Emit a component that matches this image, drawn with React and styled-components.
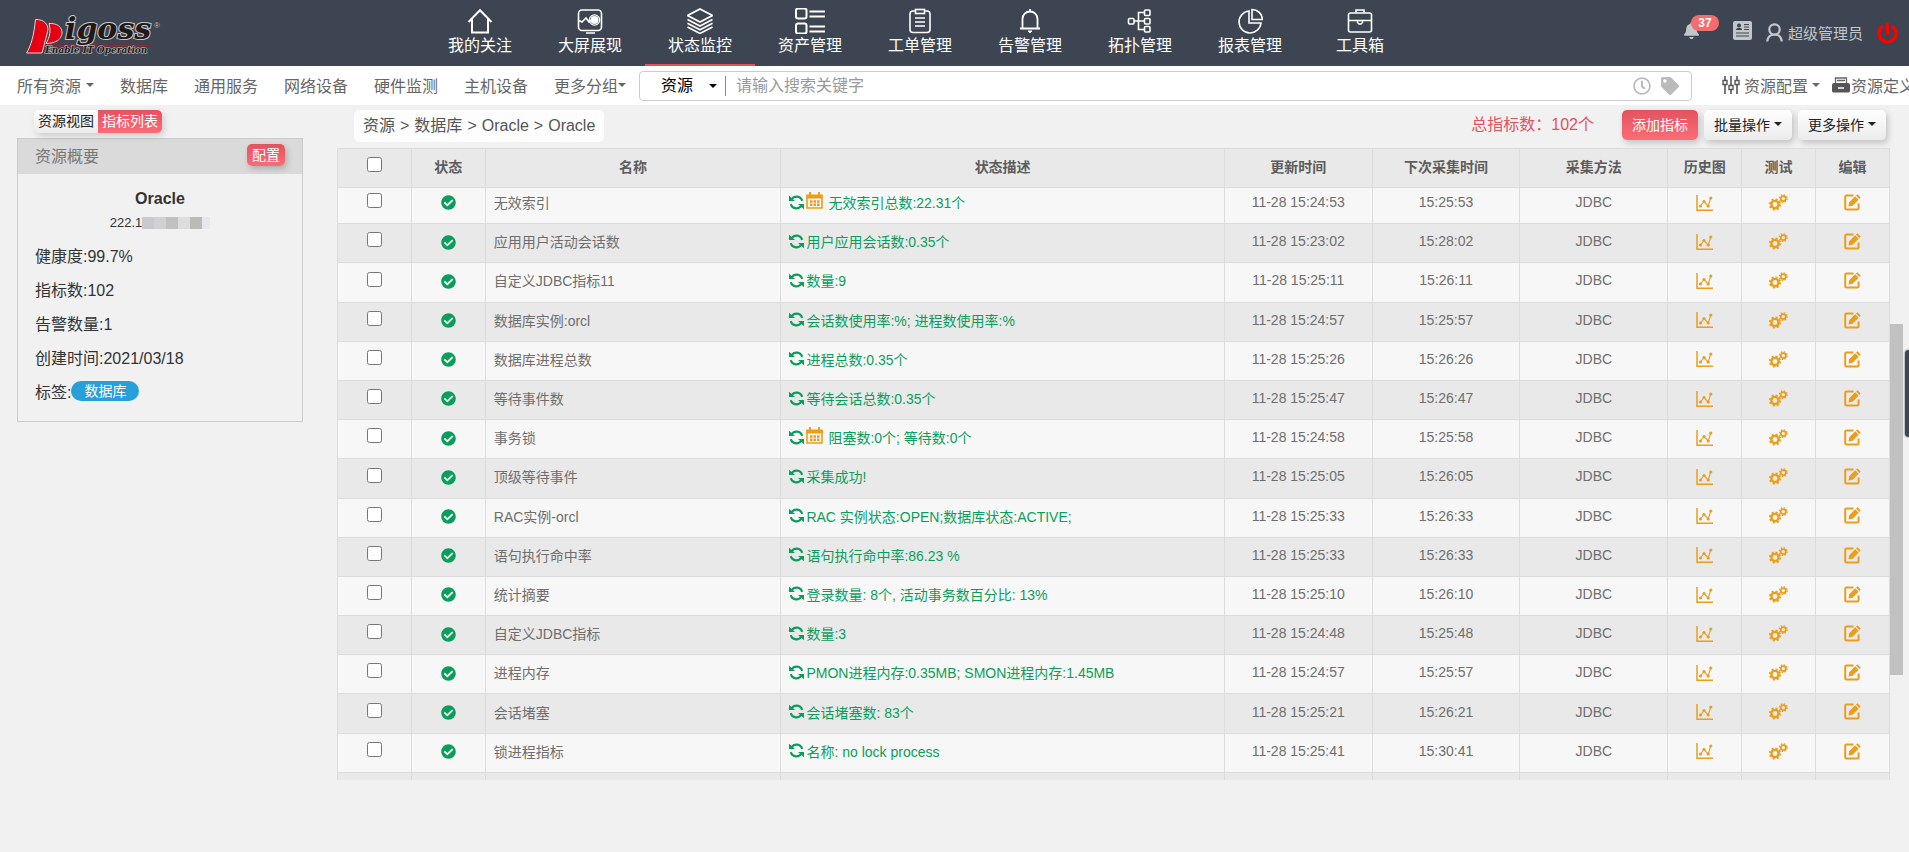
import React, { useLayoutEffect, useRef } from 'react';
import styled, { createGlobalStyle } from 'styled-components';
import { FaBell, FaCheckCircle, FaPowerOff, FaRegClock, FaTag } from 'react-icons/fa';

const GlobalStyle = createGlobalStyle`
    * {
        box-sizing: border-box;
    }

    body {
        margin: 0;
        background: #f1f1f1;
        color: #333;
        font-family: 'Liberation Sans', 'Noto Sans CJK SC', sans-serif;
        font-size: 14px;
        overflow: hidden;
    }

    button,
    input,
    select {
        font-family: inherit;
    }

    a {
        color: inherit;
        text-decoration: none;
    }
`;

const Header = styled.header`
    display: flex;
    height: 66px;
    background: #3e4552;
    color: #fff;
`;

const Brand = styled.a`
    flex: 0 0 425px;
`;

const MainNav = styled.nav`
    display: flex;
    flex: 1;
`;

const NavItem = styled.a`
    display: flex;
    flex-direction: column;
    align-items: center;
    width: 110px;
    padding-top: 8px;
    border-bottom: 2px solid ${({ $active }) => ($active ? '#e4525e' : 'transparent')};
    font-size: 16px;
    line-height: 24px;

    svg {
        fill: none;
        stroke: #fff;
        stroke-width: 2;
    }
`;

const UserBar = styled.div`
    display: flex;
    align-items: center;
    padding-right: 11px;
    color: #c4c6ca;
    font-size: 15px;
`;

const Notices = styled.div`
    display: flex;
    align-items: center;
    gap: 33px;
    padding-bottom: 5px;
`;

const IconButton = styled.button`
    display: inline-flex;
    align-items: center;
    padding: 0;
    border: 0;
    background: none;
    color: ${({ $color }) => $color || 'inherit'};
    cursor: pointer;
`;

const Alerts = styled(IconButton)`
    position: relative;
`;

const Badge = styled.span`
    position: absolute;
    left: 8px;
    top: -7px;
    width: 28px;
    border-radius: 8px;
    background: #f66c6c;
    color: #fff;
    font-size: 12px;
    font-weight: bold;
    line-height: 16px;
    text-align: center;
`;

const UserLink = styled.a`
    display: flex;
    align-items: center;
    gap: 5px;
    margin: 0 14px;
    padding-bottom: 2px;
`;

const SubNav = styled.div`
    display: flex;
    align-items: center;
    height: 39px;
    padding-left: 17px;
    background: #fff;
    color: #666;
    font-size: 16px;
    white-space: nowrap;
`;

const Groups = styled.nav`
    display: flex;
    gap: 26px;
    margin-right: 13px;
    padding-bottom: 2px;
`;

const MenuButton = styled.button`
    display: flex;
    align-items: center;
    gap: ${({ $gap }) => $gap || 0}px;
    padding: 0;
    border: 0;
    background: none;
    color: inherit;
    font-size: 16px;
    cursor: pointer;
`;

const Caret = styled.span`
    border: 4px solid transparent;
    border-top-color: currentColor;
    border-bottom: 0;
`;

const Search = styled.form`
    display: flex;
    flex: 1;
    align-items: center;
    height: 30px;
    padding: 0 12px 0 21px;
    border: 1px solid #ccc;
    border-radius: 4px;
    color: #000;
`;

const ScopeSelect = styled.select`
    width: 48px;
    padding: 0;
    border: 0;
    background: none;
    color: #000;
    font-size: 16px;
    appearance: none;
`;

const Divider = styled.span`
    height: 20px;
    margin: 0 10px 0 8px;
    border-left: 1px solid #888;
`;

const SearchInput = styled.input`
    flex: 1;
    padding: 0;
    border: 0;
    outline: 0;
    background: none;
    font-size: 16px;

    &::placeholder {
        color: #999;
    }
`;

const SearchIcons = styled.div`
    display: flex;
    gap: 10px;
`;

const Tools = styled.div`
    display: flex;
    gap: 12px;
    width: 187px;
    margin-left: 30px;
    padding-bottom: 2px;
    overflow: hidden;
`;

const Content = styled.div`
    display: flex;
    gap: 34px;
    padding: 5px 6px 0 17px;
`;

const Sidebar = styled.aside`
    flex: 0 0 286px;
`;

const gradients = {
    red: 'linear-gradient(#e4525e, #f96d77)',
    plain: 'linear-gradient(#fff, #ebebeb)'
};

const Button = styled.button`
    display: inline-flex;
    align-items: center;
    justify-content: center;
    gap: 4px;
    height: ${({ $small }) => ($small ? 22 : 30)}px;
    padding: 0 ${({ $small }) => ($small ? 5 : 10)}px 2px;
    border: 0;
    border-radius: 5px;
    background: ${({ $tone }) => gradients[$tone]};
    box-shadow: 2px 3px 6px rgba(0, 0, 0, 0.2);
    color: ${({ $tone }) => ($tone === 'red' ? '#fff' : '#222')};
    font-size: 14px;
    white-space: nowrap;
    cursor: pointer;
`;

const Switcher = styled.div`
    display: inline-flex;
    margin: 0 0 5px 17px;
    border-radius: 5px;
    box-shadow: 2px 3px 6px rgba(0, 0, 0, 0.15);
    vertical-align: top;
`;

const SwitchTab = styled.button`
    height: 23px;
    padding: 0 4px 3px;
    border: 0;
    border-radius: ${({ $active }) => ($active ? '0 5px 5px 0' : '5px 0 0 5px')};
    background: ${({ $active }) => ($active ? gradients.red : gradients.plain)};
    color: ${({ $active }) => ($active ? '#fff' : '#222')};
    font-size: 14px;
    cursor: pointer;
`;

const Panel = styled.section`
    border: 1px solid #ccc;
`;

const PanelHead = styled.div`
    display: flex;
    align-items: center;
    justify-content: space-between;
    height: 35px;
    padding: 0 17px 3px;
    background: #dadada;
`;

const PanelTitle = styled.h2`
    margin: 0;
    color: #777;
    font-size: 16px;
    font-weight: normal;
`;

const PanelBody = styled.div`
    padding: 13px 17px;
    font-size: 16px;
`;

const ResourceName = styled.div`
    font-weight: bold;
    line-height: 24px;
    text-align: center;
`;

const Address = styled.div`
    display: flex;
    align-items: center;
    justify-content: center;
    margin-bottom: 3px;
    font-size: 13px;
    line-height: 24px;
`;

const Mask = styled.span`
    display: flex;
    height: 12px;
`;

const MaskBlock = styled.span`
    width: ${({ $w }) => $w}px;
    background: ${({ $color }) => $color};
`;

const Fact = styled.div`
    display: flex;
    align-items: center;
    height: 34px;
`;

const Tag = styled.span`
    padding: 0 13px;
    border-radius: 10px;
    background: #25a0da;
    color: #fff;
    font-size: 14px;
    line-height: 20px;
`;

const Main = styled.main`
    flex: 1;
    min-width: 0;
`;

const Toolbar = styled.div`
    display: flex;
    gap: 6px;
    height: 38px;
    padding: 0 17px;
`;

const Crumbs = styled.nav`
    height: 32px;
    margin-right: auto;
    padding: 0 9px;
    border-radius: 5px;
    background: #fdfdfd;
    color: #555;
    font-size: 16px;
    line-height: 32px;
`;

const CrumbSep = styled.span`
    padding: 0 5px;
`;

const Total = styled.div`
    margin-right: 22px;
    color: #e4525e;
    font-size: 16px;
    line-height: 30px;
`;

const TableArea = styled.div`
    display: flex;
    height: calc(100vh - 220px);
`;

const Viewport = styled.div`
    flex: 1;
    overflow: hidden;
`;

const Table = styled.table`
    width: 100%;
    height: 667px;
    table-layout: fixed;
    border-collapse: separate;
    border-spacing: 0;
    border-left: 1px solid #dcdcdc;
    color: #6e6e6e;
    font-size: 14px;
`;

const Col = styled.col`
    width: ${({ $span }) => ($span * 100) / 21}%;
`;

const Th = styled.th`
    position: sticky;
    top: 0;
    z-index: 1;
    height: 40px;
    padding: 0 8px 4px;
    border: solid #dcdcdc;
    border-width: 1px 1px 1px 0;
    background: #e9e9e9;
    color: #5c5c5c;
`;

const Td = styled.td`
    height: 39px;
    padding: 0 8px 4px;
    border: solid #dcdcdc;
    border-width: 0 1px 1px 0;
    text-align: ${({ $left }) => ($left ? 'left' : 'center')};
    white-space: nowrap;

    > svg,
    button {
        vertical-align: middle;
    }
`;

const Row = styled.tr`
    background: ${({ $odd }) => ($odd ? '#f7f7f7' : '#e9e9e9')};
`;

const Check = styled.input`
    width: 15px;
    height: 15px;
    margin: 0 0 3px;
    vertical-align: middle;
`;

const Description = styled.div`
    display: flex;
    align-items: center;
    gap: 2px;
    color: #0a9e5c;
`;

const CalendarIcon = styled.svg`
    margin: 0 3px 4px 0;
`;

const ScrollTrack = styled.div`
    flex: 0 0 13px;
    background: #f1f1f1;
`;

const ScrollThumb = styled.div`
    height: 351px;
    margin-top: 176px;
    background: #c1c1c1;
`;

const DrawerHandle = styled.button`
    position: fixed;
    top: 350px;
    right: 0;
    width: 4px;
    height: 87px;
    padding: 0;
    border: 0;
    border-radius: 4px 0 0 4px;
    background: #3e4552;
    box-shadow: 0 0 2px #3e4552;
`;

const navItems = [
    {
        label: '我的关注',
        icon: (
            <>
                <path d="M1.5 14 13 2.2 24.5 14" />
                <path d="M5 11v13.5h16V11" />
            </>
        )
    },
    {
        label: '大屏展现',
        icon: (
            <>
                <rect x="1.5" y="2" width="23" height="20.5" rx="3.5" strokeWidth="1.6" />
                <path d="M2 12.5 5 14l4-4 3 4 2-2M9 25h9" strokeWidth="1.6" />
                <circle cx="17.5" cy="12" r="5.2" strokeWidth="1.2" />
                <circle cx="17.5" cy="12" r="3" fill="#fff" />
            </>
        )
    },
    {
        label: '状态监控',
        active: true,
        icon: (
            <>
                <path d="M13 1 25.5 7.5 13 14 .5 7.5z" strokeWidth="1.8" />
                <path
                    d="M.5 11.5 13 18l12.5-6.5M.5 15.3 13 21.8l12.5-6.5M.5 19 13 25.5 25.5 19"
                    strokeWidth="1.6"
                />
            </>
        )
    },
    {
        label: '资产管理',
        width: 30,
        icon: (
            <>
                <rect x="-1" y="0.5" width="10.5" height="10" rx="2" />
                <rect x="-1" y="15.5" width="10.5" height="10" rx="2" />
                <path d="M12.5 3.5H28M12.5 8.5H28M12.5 18.5H28M12.5 23.5H28" />
            </>
        )
    },
    {
        label: '工单管理',
        icon: (
            <g strokeWidth="1.6">
                <path d="M8 3H6a3 3 0 0 0-3 3v15.5a3 3 0 0 0 3 3h14a3 3 0 0 0 3-3V6a3 3 0 0 0-3-3h-2" />
                <rect x="8.5" y="1.5" width="9" height="4" />
                <path d="M8 10h10M8 14h10M8 18h10" />
            </g>
        )
    },
    {
        label: '告警管理',
        icon: (
            <>
                <path d="M3 20.5h20M5.5 20V11a7.5 7.5 0 0 1 15 0v9M13 1v3" strokeWidth="1.8" />
                <path d="M11 23h4l-2 2z" fill="#fff" strokeWidth="1" />
            </>
        )
    },
    {
        label: '拓扑管理',
        icon: (
            <g strokeWidth="1.6">
                <rect x="1.5" y="10.5" width="5.5" height="5.5" rx="1" />
                <rect x="17.5" y="2" width="5.5" height="5.5" rx="1" />
                <rect x="17.5" y="10.5" width="5.5" height="5.5" rx="1" />
                <rect x="17.5" y="18.5" width="5.5" height="5.5" rx="1" />
                <path d="M7 13h10.5M17.5 4.5h-6v17h6" />
            </g>
        )
    },
    {
        label: '报表管理',
        icon: (
            <g strokeWidth="1.6">
                <path d="M12 3A11 11 0 1 0 24 15H12z" />
                <path d="M15 1.5v10h10.5A10.5 10.5 0 0 0 15 1.5z" />
            </g>
        )
    },
    {
        label: '工具箱',
        icon: (
            <g strokeWidth="1.6">
                <rect x="1.5" y="5" width="23" height="19" rx="2" />
                <path d="M9 4.5V2h8v2.5M1.5 12.5h23M10.5 13v1.5L12 16h2l1.5-1.5V13" />
            </g>
        )
    }
];

const rows = [
    ['无效索引', '无效索引总数:22.31个', '11-28 15:24:53', '15:25:53', true],
    ['应用用户活动会话数', '用户应用会话数:0.35个', '11-28 15:23:02', '15:28:02'],
    ['自定义JDBC指标11', '数量:9', '11-28 15:25:11', '15:26:11'],
    ['数据库实例:orcl', '会话数使用率:%; 进程数使用率:%', '11-28 15:24:57', '15:25:57'],
    ['数据库进程总数', '进程总数:0.35个', '11-28 15:25:26', '15:26:26'],
    ['等待事件数', '等待会话总数:0.35个', '11-28 15:25:47', '15:26:47'],
    ['事务锁', '阻塞数:0个; 等待数:0个', '11-28 15:24:58', '15:25:58', true],
    ['顶级等待事件', '采集成功!', '11-28 15:25:05', '15:26:05'],
    ['RAC实例-orcl', 'RAC 实例状态:OPEN;数据库状态:ACTIVE;', '11-28 15:25:33', '15:26:33'],
    ['语句执行命中率', '语句执行命中率:86.23 %', '11-28 15:25:33', '15:26:33'],
    ['统计摘要', '登录数量: 8个, 活动事务数百分比: 13%', '11-28 15:25:10', '15:26:10'],
    ['自定义JDBC指标', '数量:3', '11-28 15:24:48', '15:25:48'],
    ['进程内存', 'PMON进程内存:0.35MB; SMON进程内存:1.45MB', '11-28 15:24:57', '15:25:57'],
    ['会话堵塞', '会话堵塞数: 83个', '11-28 15:25:21', '15:26:21'],
    ['锁进程指标', '名称: no lock process', '11-28 15:25:41', '15:30:41']
];

const columns = [
    ['状态', 1],
    ['名称', 4],
    ['状态描述', 6],
    ['更新时间', 2],
    ['下次采集时间', 2],
    ['采集方法', 2],
    ['历史图', 1],
    ['测试', 1],
    ['编辑', 1]
];

const maskColors = ['#c8cacd', '#cfd1d6', '#c1c1c0', '#dddddb', '#bbbab5', '#e6e8eb'];

const Logo = () => (
    <svg width="170" height="66" viewBox="0 0 170 66" role="img" aria-label="Pigoss">
        <g stroke="#d8d8da" strokeWidth="1">
            <path d="M35.5 19.5C44 19 49.5 25 47.5 32L42 53H26.5C31 46 34 35 35.5 19.5z" fill="#e60012" />
            <path d="M49 23.5C57 23 62.500 27 62 33.5 61 40 55 43.5 46 43.5 50 37 51 30 49 23.5z" fill="#e60012" />
        </g>
        <path d="M45 45.5h107" stroke="#e60012" strokeWidth="1.5" />
        <g
            fontFamily="DejaVu Serif, serif"
            fontWeight="bold"
            fontStyle="italic"
            fill="#231815"
            stroke="#c9cacd"
            paintOrder="stroke"
        >
            <text x="65" y="39" fontSize="30" strokeWidth="2">
                igoss
            </text>
            <text x="45" y="53" fontSize="9" strokeWidth="1">
                Enable IT Operation
            </text>
        </g>
        <text x="154" y="28" fontSize="8" fill="#b5b5b8">
            ®
        </text>
    </svg>
);

const NewsIcon = () => (
    <svg width="19" height="19" viewBox="0 0 19 19">
        <rect width="19" height="19" rx="2" fill="#c4c6ca" />
        <circle cx="6" cy="4.5" r="2" fill="#3e4552" />
        <path d="M3 9c0-3 6-3 6 0z" fill="#3e4552" />
        <path d="M11 3.5h5M11 6h5M11 8.5h5M3 12h13M3 15h13" stroke="#3e4552" strokeWidth="1" />
    </svg>
);

const UserIcon = () => (
    <svg width="17" height="19" viewBox="0 0 17 19" fill="none" stroke="#c4c6ca" strokeWidth="2.2">
        <circle cx="8.5" cy="6.5" r="5.2" />
        <path d="M1.2 18.5c.5-4.5 3-7 7.3-7s6.8 2.5 7.3 7" />
    </svg>
);

const SlidersIcon = () => (
    <svg width="18" height="18" viewBox="0 0 18 18" fill="none" stroke="#555" strokeWidth="1.6">
        <path d="M3 0v4M3 9v9M9 0v9M9 14v4M15 0v4M15 9v9" />
        <path d="M1 4.5h4v4H1zM7 9.5h4v4H7zM13 4.5h4v4h-4z" strokeWidth="1.4" />
    </svg>
);

const DrawerIcon = () => (
    <svg width="18" height="16" viewBox="0 0 18 16">
        <path d="M3.5 6V1h11v5M5 3.5h8" fill="none" stroke="#666" strokeWidth="1.3" />
        <path d="M0 8q0-2 2-2h14q2 0 2 2v6q0 1.5-2 1.5H2q-2 0-2-1.5z" fill="#555" />
        <path d="M6 11h6" stroke="#fff" strokeWidth="1.5" />
    </svg>
);

const RefreshIcon = () => (
    <svg width="15" height="15" viewBox="0 0 15 15">
        <path
            d="M2.5 4.5C5 .5 11.5 .5 13.2 5.8M12.5 10.5C10 14.500 3.500 14.500 1.800 9.200"
            fill="none"
            stroke="#0a9e5c"
            strokeWidth="2.2"
        />
        <path d="M0 .8V6h6zM15 14.2V9H9z" fill="#0a9e5c" />
    </svg>
);

const Calendar = () => (
    <CalendarIcon width="17" height="17" viewBox="0 0 17 17">
        <path d="M1 3v13h15V3" fill="none" stroke="#eb9e1c" strokeWidth="1.6" />
        <path d="M.3 2.5h16.4v4H.3zM3 0h2v3H3zM12 0h2v3h-2z" fill="#eb9e1c" />
        <path d="M4 9.5h9.5M4 12.7h9.5" stroke="#eb9e1c" strokeWidth="2.4" strokeDasharray="2.5 1" />
    </CalendarIcon>
);

const ChartIcon = () => (
    <svg width="17" height="16" viewBox="0 0 17 16" fill="none" stroke="#eb9e1c">
        <path d="M1 0v15.2h16" strokeWidth="1.5" />
        <path d="M4.5 11 8 6.5l4.2 4.5L14.8 3" strokeWidth="1.1" />
        <g fill="#eb9e1c" stroke="none">
            <circle cx="4.5" cy="11" r="1.6" />
            <circle cx="8" cy="6.5" r="1.6" />
            <circle cx="12.2" cy="11" r="1.6" />
            <circle cx="14.8" cy="3" r="1.6" />
        </g>
    </svg>
);

const GearsIcon = () => (
    <svg width="19" height="17" viewBox="0 0 19 17" fill="none" stroke="#eb9e1c">
        <circle cx="6" cy="10.5" r="3.6" strokeWidth="2.4" />
        <circle cx="6" cy="10.5" r="5.2" strokeWidth="1.8" strokeDasharray="2.04 2.04" />
        <circle cx="14.3" cy="4.6" r="2.5" strokeWidth="1.7" />
        <circle cx="14.3" cy="4.6" r="3.8" strokeWidth="1.4" strokeDasharray="1.49 1.49" />
    </svg>
);

const EditIcon = () => (
    <svg width="17" height="17" viewBox="0 0 17 17">
        <path
            d="M9.5 1.5h-7q-1.3 0-1.3 1.3v11.4q0 1.3 1.3 1.3h10.8q1.3 0 1.3-1.3V9.5"
            fill="none"
            stroke="#eb9e1c"
            strokeWidth="2"
        />
        <path d="M4.5 12.5l.7-4.2 6-6 3.4 3.4-6 6zM12 1.6 13.5.2l3.2 3.2-1.4 1.5z" fill="#eb9e1c" />
    </svg>
);

const MetricRow = ({ row, odd }) => {
    const [name, description, updated, next, calendar] = row;
    return (
        <Row $odd={odd}>
            <Td>
                <Check type="checkbox" aria-label={name} />
            </Td>
            <Td>
                <FaCheckCircle size={15} color="#0a9e5c" />
            </Td>
            <Td $left>{name}</Td>
            <Td $left>
                <Description>
                    <RefreshIcon />
                    {calendar && <Calendar />}
                    <span>{description}</span>
                </Description>
            </Td>
            <Td>{updated}</Td>
            <Td>{next}</Td>
            <Td>JDBC</Td>
            <Td>
                <IconButton aria-label="历史图">
                    <ChartIcon />
                </IconButton>
            </Td>
            <Td>
                <IconButton aria-label="测试">
                    <GearsIcon />
                </IconButton>
            </Td>
            <Td>
                <IconButton aria-label="编辑">
                    <EditIcon />
                </IconButton>
            </Td>
        </Row>
    );
};

const MetricTable = () => {
    const viewport = useRef(null);

    useLayoutEffect(() => {
        viewport.current.scrollTop = 3;
    }, []);

    return (
        <TableArea>
            <Viewport ref={viewport}>
                <Table>
                    <colgroup>
                        <Col $span={1} />
                        {columns.map(([label, span]) => (
                            <Col key={label} $span={span} />
                        ))}
                    </colgroup>
                    <thead>
                        <tr>
                            <Th>
                                <Check type="checkbox" aria-label="全选" />
                            </Th>
                            {columns.map(([label]) => (
                                <Th key={label}>{label}</Th>
                            ))}
                        </tr>
                    </thead>
                    <tbody>
                        {rows.map((row, index) => (
                            <MetricRow key={row[0]} row={row} odd={index % 2 === 0} />
                        ))}
                        <Row>
                            <Td />
                            {columns.map(([label]) => (
                                <Td key={label} />
                            ))}
                        </Row>
                    </tbody>
                </Table>
            </Viewport>
            <ScrollTrack>
                <ScrollThumb />
            </ScrollTrack>
        </TableArea>
    );
};

const App = () => (
    <>
        <GlobalStyle />
        <Header>
            <Brand href="#">
                <Logo />
            </Brand>
            <MainNav>
                {navItems.map(({ label, icon, active, width = 26 }) => (
                    <NavItem key={label} href="#" $active={active}>
                        <svg width={width} height="26" viewBox={`${width > 26 ? -2 : 0} 0 ${width} 26`}>
                            {icon}
                        </svg>
                        {label}
                    </NavItem>
                ))}
            </MainNav>
            <UserBar>
                <Notices>
                    <Alerts aria-label="告警">
                        <FaBell size={17} />
                        <Badge>37</Badge>
                    </Alerts>
                    <NewsIcon />
                </Notices>
                <UserLink href="#">
                    <UserIcon />
                    超级管理员
                </UserLink>
                <IconButton $color="#f00" aria-label="退出">
                    <FaPowerOff size={21} />
                </IconButton>
            </UserBar>
        </Header>
        <SubNav>
            <Groups>
                <MenuButton $gap={5}>
                    所有资源
                    <Caret />
                </MenuButton>
                <a href="#">数据库</a>
                <a href="#">通用服务</a>
                <a href="#">网络设备</a>
                <a href="#">硬件监测</a>
                <a href="#">主机设备</a>
                <MenuButton>
                    更多分组
                    <Caret />
                </MenuButton>
            </Groups>
            <Search>
                <ScopeSelect aria-label="搜索范围">
                    <option>资源</option>
                </ScopeSelect>
                <Caret />
                <Divider />
                <SearchInput placeholder="请输入搜索关键字" aria-label="搜索" />
                <SearchIcons>
                    <FaRegClock size={18} color="#bbb" />
                    <FaTag size={18} color="#bbb" />
                </SearchIcons>
            </Search>
            <Tools>
                <MenuButton $gap={4}>
                    <SlidersIcon />
                    资源配置
                    <Caret />
                </MenuButton>
                <MenuButton $gap={1}>
                    <DrawerIcon />
                    资源定义
                </MenuButton>
            </Tools>
        </SubNav>
        <Content>
            <Sidebar>
                <Switcher>
                    <SwitchTab>资源视图</SwitchTab>
                    <SwitchTab $active>指标列表</SwitchTab>
                </Switcher>
                <Panel>
                    <PanelHead>
                        <PanelTitle>资源概要</PanelTitle>
                        <Button $small $tone="red">
                            配置
                        </Button>
                    </PanelHead>
                    <PanelBody>
                        <ResourceName>Oracle</ResourceName>
                        <Address>
                            222.1
                            <Mask>
                                {maskColors.map((color, index) => (
                                    <MaskBlock key={color} $color={color} $w={index === 5 ? 8 : 12} />
                                ))}
                            </Mask>
                        </Address>
                        <Fact>健康度:99.7%</Fact>
                        <Fact>指标数:102</Fact>
                        <Fact>告警数量:1</Fact>
                        <Fact>创建时间:2021/03/18</Fact>
                        <Fact>
                            标签:<Tag>数据库</Tag>
                        </Fact>
                    </PanelBody>
                </Panel>
            </Sidebar>
            <Main>
                <Toolbar>
                    <Crumbs>
                        <a href="#">资源</a>
                        <CrumbSep>&gt;</CrumbSep>
                        <a href="#">数据库</a>
                        <CrumbSep>&gt;</CrumbSep>
                        <a href="#">Oracle</a>
                        <CrumbSep>&gt;</CrumbSep>
                        <a href="#">Oracle</a>
                    </Crumbs>
                    <Total>总指标数：102个</Total>
                    <Button $tone="red">添加指标</Button>
                    <Button $tone="plain">
                        批量操作
                        <Caret />
                    </Button>
                    <Button $tone="plain">
                        更多操作
                        <Caret />
                    </Button>
                </Toolbar>
                <MetricTable />
            </Main>
        </Content>
        <DrawerHandle aria-label="展开" />
    </>
);

export default App;
